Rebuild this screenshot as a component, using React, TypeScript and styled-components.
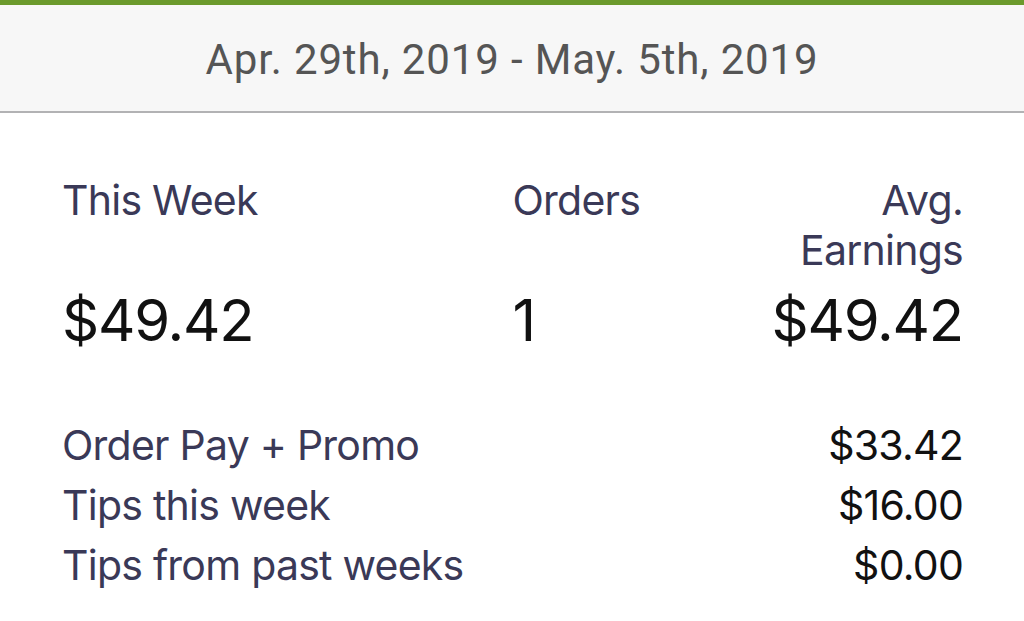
import React from 'react'
import styled, { createGlobalStyle } from 'styled-components'

const GlobalStyle = createGlobalStyle`
  html, body {
    margin: 0;
    padding: 0;
    background: #ffffff;
  }
  body {
    font-family: Inter, "Noto Sans", "Liberation Sans", sans-serif;
    -webkit-font-smoothing: antialiased;
  }
`

const Page = styled.div`
  width: 1024px;
  height: 621px;
  overflow: hidden;
  background: #ffffff;
  border-top: 5px solid #6b9a2c;
  box-sizing: border-box;
`

const DateBar = styled.div`
  height: 106px;
  display: flex;
  align-items: center;
  justify-content: center;
  background: #f7f7f7;
  border-bottom: 2px solid #b2b2b4;
`

const DateText = styled.span`
  font-family: Roboto, "Liberation Sans", sans-serif;
  font-size: 42px;
  letter-spacing: 0.85px;
  color: #555555;
  margin-top: 2px;
`

const Content = styled.div`
  padding: 62px 61px 0 62px;
`

const Summary = styled.div`
  display: grid;
  grid-template-columns: 2fr 1fr 1fr;
  row-gap: 10px;
`

const Label = styled.div<{ $align?: 'left' | 'right' }>`
  font-size: 41px;
  line-height: 50px;
  letter-spacing: -0.75px;
  color: #3a3957;
  text-align: ${p => p.$align ?? 'left'};
`

const Amount = styled.div<{ $align?: 'left' | 'right' }>`
  font-size: 58px;
  line-height: 70px;
  letter-spacing: -1.2px;
  color: #111111;
  text-align: ${p => p.$align ?? 'left'};
`

const Breakdown = styled.div`
  margin-top: 60px;
  display: flex;
  flex-direction: column;
`

const Line = styled.div`
  display: flex;
  justify-content: space-between;
  font-size: 41px;
  line-height: 60px;
  letter-spacing: -0.75px;
`

const LineName = styled.span`
  color: #3a3957;
`

const LineValue = styled.span`
  color: #111111;
`

const lines = [
  { name: 'Order Pay + Promo', value: '$33.42' },
  { name: 'Tips this week', value: '$16.00' },
  { name: 'Tips from past weeks', value: '$0.00' },
]

export default function App() {
  return (
    <>
      <GlobalStyle />
      <Page>
        <DateBar>
          <DateText>Apr. 29th, 2019 - May. 5th, 2019</DateText>
        </DateBar>
        <Content>
          <Summary>
            <Label>This Week</Label>
            <Label>Orders</Label>
            <Label $align='right'>Avg. Earnings</Label>
            <Amount>$49.42</Amount>
            <Amount>1</Amount>
            <Amount $align='right'>$49.42</Amount>
          </Summary>
          <Breakdown>
            {lines.map(l => (
              <Line key={l.name}>
                <LineName>{l.name}</LineName>
                <LineValue>{l.value}</LineValue>
              </Line>
            ))}
          </Breakdown>
        </Content>
      </Page>
    </>
  )
}
